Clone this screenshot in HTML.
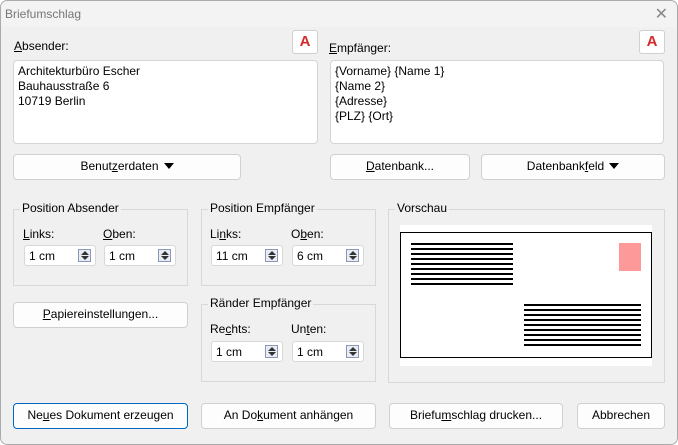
<!DOCTYPE html>
<html><head><meta charset="utf-8"><style>
*{box-sizing:border-box;margin:0;padding:0}
body{width:678px;height:445px;background:#fff;font-family:"Liberation Sans",sans-serif;font-size:12px;color:#000;position:relative;overflow:hidden}
.win{position:absolute;left:0;top:0;width:678px;height:445px;background:#f0f0f0;border-radius:7px;overflow:hidden}
.frame{position:absolute;left:0;top:0;width:678px;height:445px;border:1px solid #aaa;border-radius:7px;pointer-events:none}
.title{position:absolute;left:0;top:0;width:100%;height:27px;background:#f3f3f3;color:#777;font-size:12px;padding:7px 0 0 5px}
.x{position:absolute;right:10px;top:4px;font-size:16px;color:#888}
.a{position:absolute}
.lbl{position:absolute;font-size:12px}
.btn{position:absolute;background:#fdfdfd;border:1px solid #d0d0d0;border-radius:4px;text-align:center;line-height:23px;font-size:12px}
.ta{position:absolute;background:#fff;border:1px solid #d4d4d4;border-radius:4px;padding:3px 4px;line-height:15px;font-size:12px}
.ab{position:absolute;width:26px;height:24px;background:#fff;border:1px solid #d0d0d0;border-radius:3px;color:#d42a2a;font-weight:bold;font-size:15px;text-align:center;line-height:22px}
.grp{position:absolute;border:1px solid #d8d8d8}
.gt{position:absolute;top:-9px;left:6px;background:#f0f0f0;padding:0 2px;font-size:12px}
.spin{position:absolute;width:72px;height:21px;background:#fff;border:1px solid #d8d8d8;border-radius:3px;padding:3px 4px;font-size:12px}
.sb{position:absolute;right:4px;top:3px;width:13px;height:13px;border:1px solid #8a98b8;background:#e8ecf4}
.sb:before{content:"";position:absolute;left:2px;top:1px;border-left:4px solid transparent;border-right:4px solid transparent;border-bottom:4px solid #333}
.sb:after{content:"";position:absolute;left:2px;top:6px;border-left:4px solid transparent;border-right:4px solid transparent;border-top:4px solid #333}
.tri{display:inline-block;border-left:5px solid transparent;border-right:5px solid transparent;border-top:6px solid #000;margin-left:5px;vertical-align:1px}
u{text-decoration:underline}
.ln{position:absolute;height:2px;background:#000}
</style></head><body><div class="win">
<div class="title">Briefumschlag</div><div class="x">✕</div>
<div class="lbl" style="left:14px;top:39px"><u>A</u>bsender:</div>
<div class="ab" style="left:292px;top:30px">A</div>
<div class="ta" style="left:13px;top:60px;width:305px;height:84px">Architekturbüro Escher<br>Bauhausstraße 6<br>10719 Berlin</div>
<div class="btn" style="left:13px;top:154px;width:228px;height:26px">Benut<u>z</u>erdaten<span class="tri"></span></div>
<div class="lbl" style="left:329px;top:41px"><u>E</u>mpfänger:</div>
<div class="ab" style="left:639px;top:30px">A</div>
<div class="ta" style="left:330px;top:60px;width:334px;height:84px">{Vorname} {Name 1}<br>{Name 2}<br>{Adresse}<br>{PLZ} {Ort}</div>
<div class="btn" style="left:330px;top:154px;width:140px;height:26px"><u>D</u>atenbank...</div>
<div class="btn" style="left:481px;top:154px;width:184px;height:26px">Datenbank<u>f</u>eld<span class="tri"></span></div>

<div class="grp" style="left:13px;top:209px;width:175px;height:77px"><div class="gt">Position Absender</div></div>
<div class="lbl" style="left:23px;top:227px"><u>L</u>inks:</div>
<div class="lbl" style="left:103px;top:227px"><u>O</u>ben:</div>
<div class="spin" style="left:24px;top:245px">1 cm<div class="sb"></div></div>
<div class="spin" style="left:104px;top:245px">1 cm<div class="sb"></div></div>

<div class="grp" style="left:201px;top:209px;width:175px;height:77px"><div class="gt">Position Empfänger</div></div>
<div class="lbl" style="left:210px;top:227px">Li<u>n</u>ks:</div>
<div class="lbl" style="left:291px;top:227px">O<u>b</u>en:</div>
<div class="spin" style="left:211px;top:245px">11 cm<div class="sb"></div></div>
<div class="spin" style="left:292px;top:245px">6 cm<div class="sb"></div></div>

<div class="btn" style="left:13px;top:302px;width:175px;height:26px"><u>P</u>apiereinstellungen...</div>

<div class="grp" style="left:201px;top:304px;width:175px;height:78px"><div class="gt">Ränder Empfänger</div></div>
<div class="lbl" style="left:210px;top:322px">Re<u>c</u>hts:</div>
<div class="lbl" style="left:291px;top:322px">Un<u>t</u>en:</div>
<div class="spin" style="left:211px;top:341px">1 cm<div class="sb"></div></div>
<div class="spin" style="left:292px;top:341px">1 cm<div class="sb"></div></div>

<div class="grp" style="left:388px;top:209px;width:277px;height:174px"><div class="gt">Vorschau</div></div>
<div class="a" style="left:400px;top:225px;width:252px;height:141px;background:#fff"></div>
<div class="a" style="left:400px;top:232px;width:252px;height:126px;border:1px solid #000"></div>
<div class="a" style="left:619px;top:243px;width:22px;height:28px;background:#fe9999"></div>
<div class="ln" style="left:411px;top:243px;width:102px"></div><div class="ln" style="left:411px;top:248px;width:102px"></div><div class="ln" style="left:411px;top:253px;width:102px"></div><div class="ln" style="left:411px;top:258px;width:102px"></div><div class="ln" style="left:411px;top:263px;width:102px"></div><div class="ln" style="left:411px;top:268px;width:102px"></div><div class="ln" style="left:411px;top:273px;width:102px"></div><div class="ln" style="left:411px;top:278px;width:102px"></div><div class="ln" style="left:411px;top:283px;width:102px"></div>
<div class="ln" style="left:524px;top:304px;width:117px"></div><div class="ln" style="left:524px;top:309px;width:117px"></div><div class="ln" style="left:524px;top:314px;width:117px"></div><div class="ln" style="left:524px;top:319px;width:117px"></div><div class="ln" style="left:524px;top:324px;width:117px"></div><div class="ln" style="left:524px;top:329px;width:117px"></div><div class="ln" style="left:524px;top:334px;width:117px"></div><div class="ln" style="left:524px;top:339px;width:117px"></div><div class="ln" style="left:524px;top:344px;width:117px"></div>

<div class="btn" style="left:13px;top:403px;width:175px;height:26px;border:1px solid #0067c0">Ne<u>u</u>es Dokument erzeugen</div>
<div class="btn" style="left:201px;top:403px;width:175px;height:26px">An Do<u>k</u>ument anhängen</div>
<div class="btn" style="left:389px;top:403px;width:174px;height:26px">Briefu<u>m</u>schlag drucken...</div>
<div class="btn" style="left:577px;top:403px;width:88px;height:26px">Abbrechen</div>
<div class="frame"></div>
</div></body></html>
